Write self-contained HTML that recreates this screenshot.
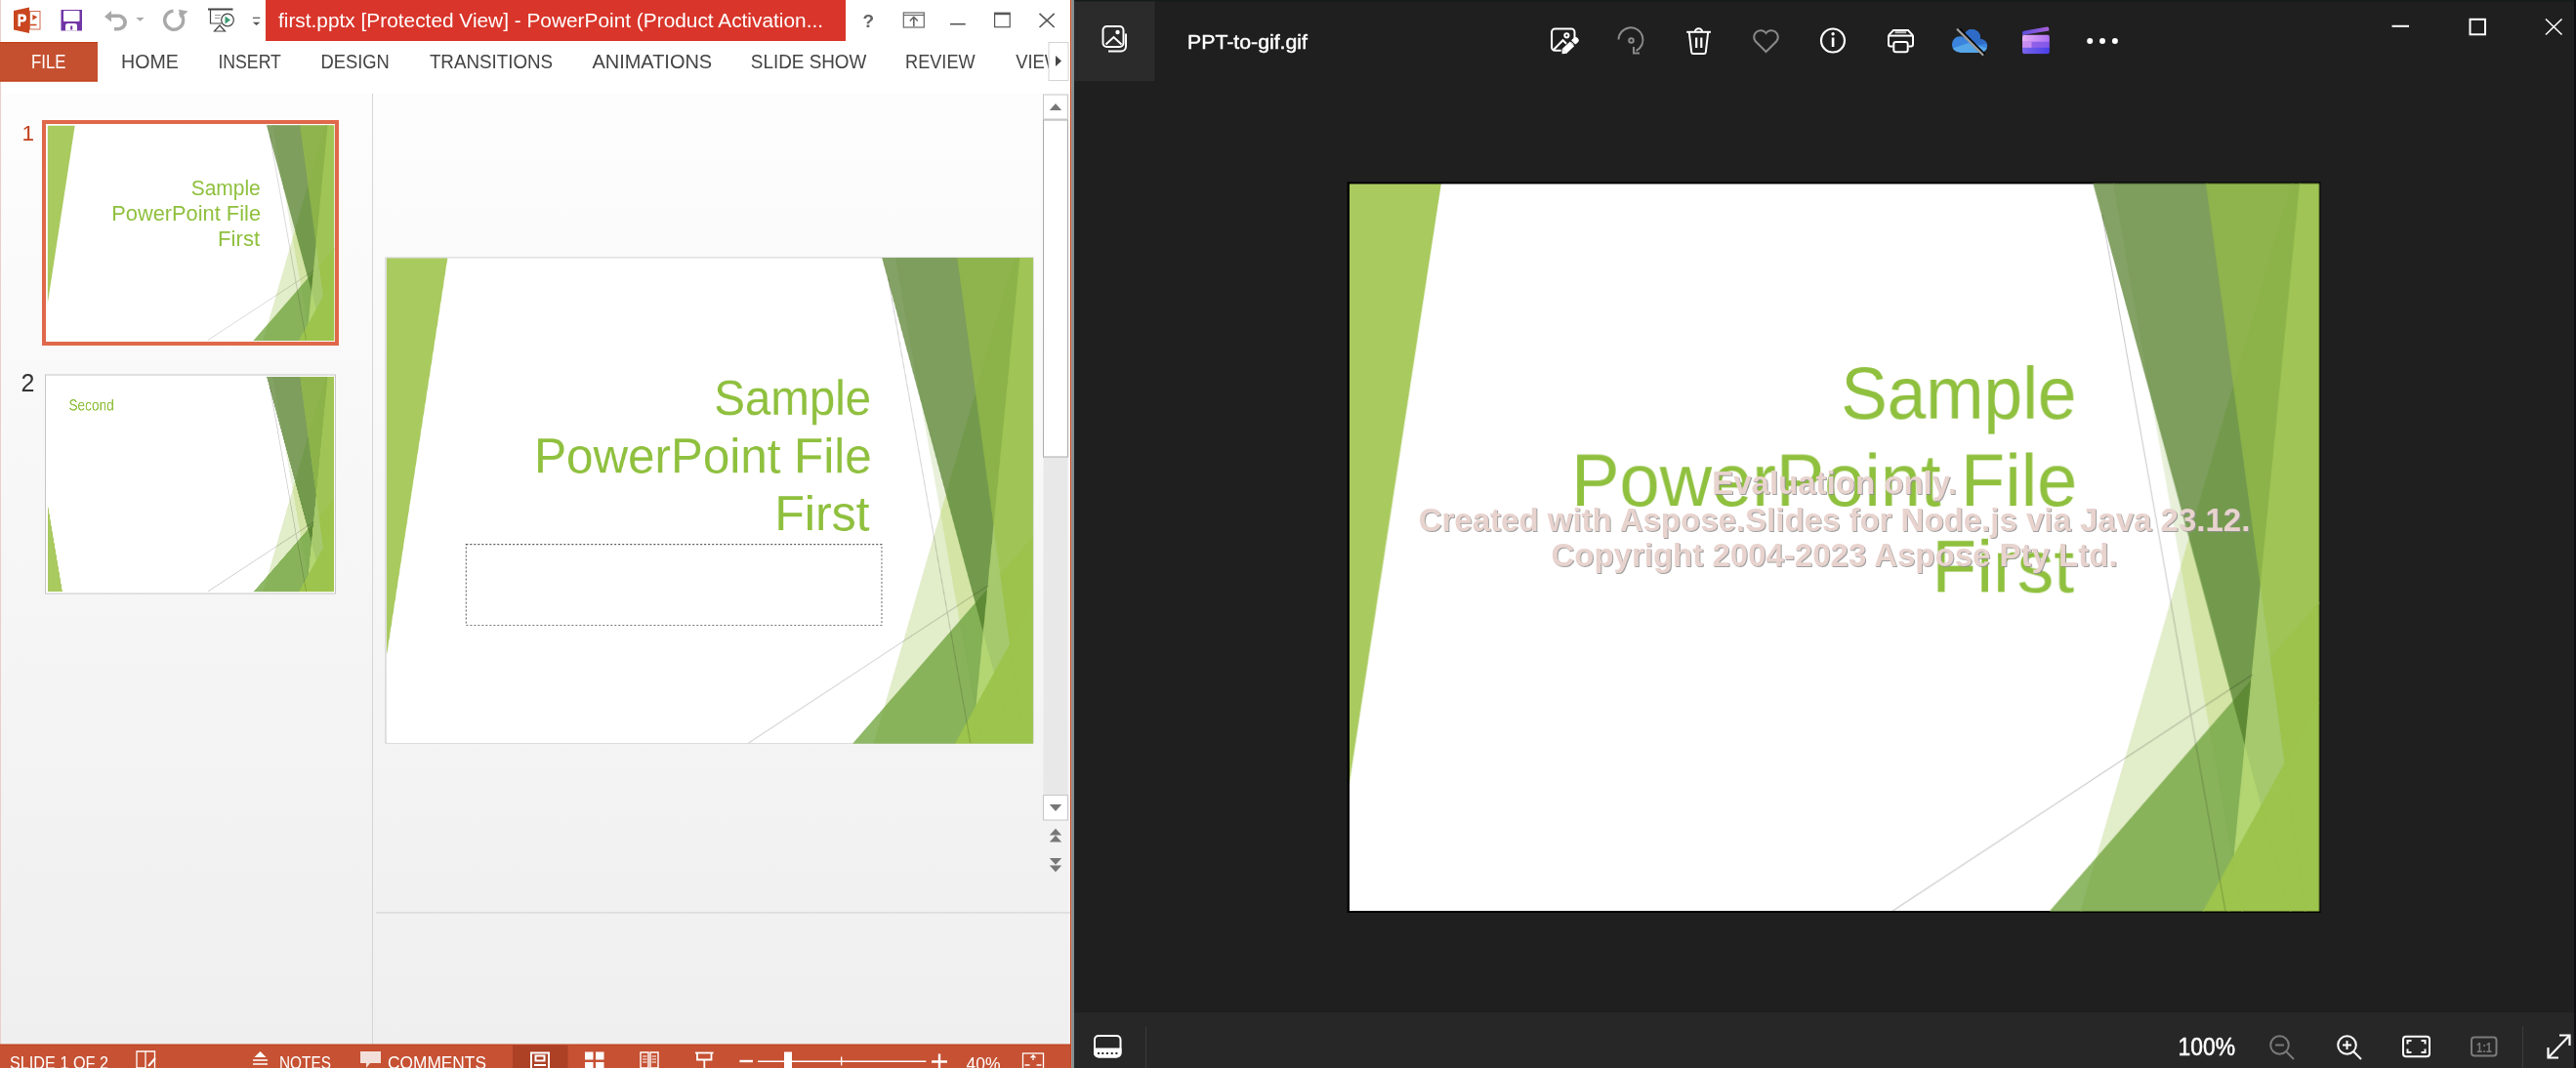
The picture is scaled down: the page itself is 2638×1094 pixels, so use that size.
<!DOCTYPE html><html><head><meta charset="utf-8"><style>html,body{margin:0;padding:0;overflow:hidden;background:#1f1f1f;width:2638px;height:1094px}svg{display:block;will-change:transform}</style></head><body>
<svg width="2638" height="1094" viewBox="0 0 2638 1094" font-family="Liberation Sans, sans-serif">
<defs><g id="facet"><path d="M768.0,0.0 L788.8,0.0 L828.0,221.9Z" fill="#84a265" stroke="#84a265" stroke-width="1.2" vector-effect="non-scaling-stroke"/>
<path d="M858.4,394.3 L828.0,221.9 L866.8,365.5Z" fill="#e8f0da" stroke="#e8f0da" stroke-width="1.2" vector-effect="non-scaling-stroke"/>
<path d="M887.9,561.4 L771.0,695.5 L858.4,394.3Z" fill="#e2edca" stroke="#e2edca" stroke-width="1.2" vector-effect="non-scaling-stroke"/>
<path d="M771.0,695.5 L755.2,750.0 L723.5,750.0Z" fill="#8fb867" stroke="#8fb867" stroke-width="1.2" vector-effect="non-scaling-stroke"/>
<path d="M884.3,0.0 L912.5,207.9 L866.8,365.5 L828.0,221.9 L788.8,0.0Z" fill="#7d9e5c" stroke="#7d9e5c" stroke-width="1.2" vector-effect="non-scaling-stroke"/>
<path d="M866.8,365.5 L912.2,533.6 L887.9,561.4 L858.4,394.3Z" fill="#d3e4a4" stroke="#d3e4a4" stroke-width="1.2" vector-effect="non-scaling-stroke"/>
<path d="M881.4,750.0 L755.2,750.0 L771.0,695.5 L887.9,561.4 L911.6,695.3Z" fill="#89b35b" stroke="#89b35b" stroke-width="1.2" vector-effect="non-scaling-stroke"/>
<path d="M912.2,533.6 L866.8,365.5 L912.5,207.9 L940.4,413.8 L930.8,512.3Z" fill="#739a4c" stroke="#739a4c" stroke-width="1.2" vector-effect="non-scaling-stroke"/>
<path d="M912.5,207.9 L884.3,0.0 L972.8,0.0Z" fill="#8fb44e" stroke="#8fb44e" stroke-width="1.2" vector-effect="non-scaling-stroke"/>
<path d="M911.6,695.3 L887.9,561.4 L912.2,533.6 L924.3,578.5 L913.2,692.3Z" fill="#84b056" stroke="#84b056" stroke-width="1.2" vector-effect="non-scaling-stroke"/>
<path d="M881.4,750.0 L911.6,695.3 L912.4,700.4 L907.6,750.0Z" fill="#9dc44c" stroke="#9dc44c" stroke-width="1.2" vector-effect="non-scaling-stroke"/>
<path d="M912.2,533.6 L930.8,512.3 L924.3,578.5Z" fill="#5e8935" stroke="#5e8935" stroke-width="1.2" vector-effect="non-scaling-stroke"/>
<path d="M912.5,207.9 L972.8,0.0 L980.8,0.0 L940.4,413.8Z" fill="#8cb34a" stroke="#8cb34a" stroke-width="1.2" vector-effect="non-scaling-stroke"/>
<path d="M940.4,413.8 L950.7,489.5 L930.8,512.3Z" fill="#a7ca6e" stroke="#a7ca6e" stroke-width="1.2" vector-effect="non-scaling-stroke"/>
<path d="M913.2,692.3 L924.3,578.5 L941.3,641.3Z" fill="#b3d572" stroke="#b3d572" stroke-width="1.2" vector-effect="non-scaling-stroke"/>
<path d="M911.6,695.3 L913.2,692.3 L912.4,700.4Z" fill="#9dc44c" stroke="#9dc44c" stroke-width="1.2" vector-effect="non-scaling-stroke"/>
<path d="M912.4,700.4 L921.2,750.0 L907.6,750.0Z" fill="#9dc44c" stroke="#9dc44c" stroke-width="1.2" vector-effect="non-scaling-stroke"/>
<path d="M941.3,641.3 L924.3,578.5 L930.8,512.3 L950.7,489.5 L965.4,597.8Z" fill="#a6c96d" stroke="#a6c96d" stroke-width="1.2" vector-effect="non-scaling-stroke"/>
<path d="M940.4,413.8 L980.8,0.0 L1000.0,0.0 L1000.0,432.9 L950.7,489.5Z" fill="#a0c556" stroke="#a0c556" stroke-width="1.2" vector-effect="non-scaling-stroke"/>
<path d="M912.4,700.4 L913.2,692.3 L941.3,641.3 L970.7,750.0 L921.2,750.0Z" fill="#9dc44c" stroke="#9dc44c" stroke-width="1.2" vector-effect="non-scaling-stroke"/>
<path d="M965.4,597.8 L950.7,489.5 L1000.0,432.9 L1000.0,535.0Z" fill="#9dc34c" stroke="#9dc34c" stroke-width="1.2" vector-effect="non-scaling-stroke"/>
<path d="M941.3,641.3 L965.4,597.8 L986.0,750.0 L970.7,750.0Z" fill="#9dc44c" stroke="#9dc44c" stroke-width="1.2" vector-effect="non-scaling-stroke"/>
<path d="M965.4,597.8 L1000.0,535.0 L1000.0,750.0 L986.0,750.0Z" fill="#9dc44c" stroke="#9dc44c" stroke-width="1.2" vector-effect="non-scaling-stroke"/></g>
<linearGradient id="pane" x1="0" y1="0" x2="0" y2="1"><stop offset="0" stop-color="#fdfdfd"/><stop offset="1" stop-color="#efefef"/></linearGradient>
</defs>
<rect x="0" y="0" width="1100" height="1094" fill="#ffffff"/>
<rect x="1" y="95" width="380" height="975" fill="url(#pane)"/>
<rect x="382" y="95" width="714" height="975" fill="url(#pane)"/>
<rect x="0" y="0" width="1" height="1094" fill="#e9cfc9"/>
<rect x="272" y="0" width="594" height="42" fill="#d9352a"/>
<text x="285" y="28" fill="#fff" font-size="20" textLength="558" lengthAdjust="spacingAndGlyphs">first.pptx [Protected View] -  PowerPoint (Product Activation...</text>
<g>
<path d="M14,11 L30,7.5 L30,34 L14,30.5Z" fill="#c9461f"/>
<rect x="30.5" y="11.5" width="10.5" height="18.5" fill="#fff" stroke="#d2694a" stroke-width="1"/>
<path d="M18.5,14.5 h4.5 a4,4 0 0 1 0,8 h-2 v4.5 h-2.5Z M21,17 v3 h1.8 a1.5,1.5 0 0 0 0,-3Z" fill="#fff"/>
<path d="M34,16 l3,1.5 l-3,2Z M31,25.5 h6.5" stroke="#c9461f" stroke-width="1.3" fill="#c9461f"/>
</g>
<path d="M62.5,10 h21.5 v21.5 h-21.5Z" fill="#7136a6"/><rect x="65" y="11" width="16.5" height="11" rx="1" fill="#fff"/><path d="M67,31.5 v-5 a2.5,2.5 0 0 1 2.5,-2.5 h7 a2.5,2.5 0 0 1 2.5,2.5 v5Z" fill="#fff"/><rect x="72.2" y="26.5" width="2" height="4" fill="#7136a6"/>
<path d="M107,17 L114,11 L114,14.5 L121,14.5 A9,8.5 0 0 1 121,31.5 L117,31.5 L117,28 L121,28 A5.2,5 0 0 0 121,18 L114,18 L114,22.5Z" fill="#a9a9a9"/>
<path d="M139.3,18 h8.4 l-4.2,3.7Z" fill="#a9a9a9"/>
<path d="M184,13.2 A9.5,9.5 0 1 1 177.5,11.2" stroke="#a9a9a9" stroke-width="3.4" fill="none"/><path d="M183,9.7 L192.5,11.5 L184.5,18.5Z" fill="#a9a9a9"/>
<g stroke="#444" fill="none" stroke-width="1.2">
<path d="M213,9.5 h25.5" stroke-width="2"/>
<path d="M215.5,10 v14 h12"/>
<path d="M220,15.5 h6 M220,18.5 h5" stroke="#999"/>
<path d="M219.5,32 l5.5,-6 l5.5,6Z"/>
<circle cx="233" cy="20.5" r="6.3"/>
</g><path d="M230.5,16.5 l5.5,4 l-5.5,4Z" fill="#3d9b73"/>
<path d="M258.9,18.3 h7.4" stroke="#555" stroke-width="1.2"/><path d="M258.9,22.7 h7.4 l-3.7,3.4Z" fill="#555"/>
<text x="883.5" y="27.5" fill="#666" font-size="19" font-weight="bold">?</text>
<g stroke="#666" fill="none" stroke-width="1.2"><rect x="925.3" y="13" width="21" height="15"/><path d="M925.3,15.5 h21"/><path d="M935.8,27 v-9 M931.8,21.5 l4,-4 l4,4" stroke-width="1.6"/></g>
<path d="M973,24.7 h15.7" stroke="#555" stroke-width="1.6"/>
<g stroke="#555" fill="none" stroke-width="1.2"><rect x="1018.6" y="13.2" width="15.6" height="14.5"/><path d="M1018.6,14.2 h15.6" stroke-width="2"/></g>
<path d="M1064.5,13.8 L1079.7,28 M1079.7,13.8 L1064.5,28" stroke="#555" stroke-width="1.6"/>
<rect x="0" y="43" width="100" height="40.5" fill="#c5502f"/><rect x="0" y="43" width="100" height="1.2" fill="#c04019"/><rect x="0" y="82.3" width="100" height="1.2" fill="#c04019"/>
<text x="32" y="69.7" fill="#fff" font-size="20.5" textLength="35.5" lengthAdjust="spacingAndGlyphs">FILE</text>
<text x="124.0" y="69.7" fill="#444" font-size="20.5" textLength="58.8" lengthAdjust="spacingAndGlyphs">HOME</text>
<text x="223.39999999999998" y="69.7" fill="#444" font-size="20.5" textLength="64.5" lengthAdjust="spacingAndGlyphs">INSERT</text>
<text x="328.4" y="69.7" fill="#444" font-size="20.5" textLength="70.4" lengthAdjust="spacingAndGlyphs">DESIGN</text>
<text x="439.9" y="69.7" fill="#444" font-size="20.5" textLength="126.2" lengthAdjust="spacingAndGlyphs">TRANSITIONS</text>
<text x="606.4000000000001" y="69.7" fill="#444" font-size="20.5" textLength="122.8" lengthAdjust="spacingAndGlyphs">ANIMATIONS</text>
<text x="768.8000000000001" y="69.7" fill="#444" font-size="20.5" textLength="118.6" lengthAdjust="spacingAndGlyphs">SLIDE SHOW</text>
<text x="927.1" y="69.7" fill="#444" font-size="20.5" textLength="71.5" lengthAdjust="spacingAndGlyphs">REVIEW</text>
<svg x="1040" y="43" width="34" height="40" overflow="hidden"><text x="0.2" y="26.7" fill="#444" font-size="20.5" textLength="47" lengthAdjust="spacingAndGlyphs">VIEW</text></svg>
<rect x="1074" y="43.5" width="20" height="39" fill="#fff" stroke="#d4d4d4" stroke-width="1"/><path d="M1081,57 l6,5.5 l-6,5.5Z" fill="#444"/>
<rect x="381" y="96" width="1" height="974" fill="#d5d5d5"/>
<rect x="385" y="934.3" width="711" height="1.2" fill="#d6d6d6"/>
<text x="22.6" y="143.5" fill="#c43e1c" font-size="22.5">1</text>
<rect x="45" y="125" width="300" height="227" fill="none" stroke="#e0684a" stroke-width="4"/>
<g transform="translate(48.9,128.8) scale(0.292800,0.292800)">
<rect x="0" y="0" width="1000" height="750" fill="#fff"/>
<path d="M0,0 L94.8,0 L0,619.1Z" fill="#a9ca5f"/>
<use href="#facet"/>
<path d="M776.7,32 L903.7,750 M560.6,750 L932,506" stroke="#000" stroke-opacity="0.15" stroke-width="1" vector-effect="non-scaling-stroke" fill="none"/>
<g fill="#8fc03e" font-size="76" transform="translate(-6,0)"><text x="507.2" y="242.3" textLength="243" lengthAdjust="spacingAndGlyphs">Sample</text><text x="229" y="331.8" textLength="522" lengthAdjust="spacingAndGlyphs">PowerPoint File</text><text x="601" y="421.3" textLength="146.8" lengthAdjust="spacingAndGlyphs">First</text></g>

</g>
<text x="21.5" y="401.3" fill="#333" font-size="25">2</text>
<rect x="46.5" y="384" width="297" height="224" fill="#fff" stroke="#c6c6c6" stroke-width="1"/>
<g transform="translate(48.9,386.2) scale(0.292800,0.292800)">
<rect x="0" y="0" width="1000" height="750" fill="#fff"/>
<path d="M0,446.6 L0,750 L51,750Z" fill="#a9ca5f"/>
<use href="#facet"/>
<path d="M776.7,32 L903.7,750 M560.6,750 L932,506" stroke="#000" stroke-opacity="0.15" stroke-width="1" vector-effect="non-scaling-stroke" fill="none"/>
<text x="73.5" y="117" fill="#8fc03e" font-size="55" textLength="158" lengthAdjust="spacingAndGlyphs">Second</text>

</g>
<rect x="395" y="264" width="663" height="497" fill="#fff" stroke="#c6c6c6" stroke-width="1"/>
<g transform="translate(395.5,264.5) scale(0.662000,0.662000)">
<rect x="0" y="0" width="1000" height="750" fill="#fff"/>
<path d="M0,0 L94.8,0 L0,619.1Z" fill="#a9ca5f"/>
<use href="#facet"/>
<path d="M776.7,32 L903.7,750 M560.6,750 L932,506" stroke="#000" stroke-opacity="0.17" stroke-width="1" vector-effect="non-scaling-stroke" fill="none"/>
<g fill="#8fc03e" font-size="76" transform="translate(0,0)"><text x="507.2" y="242.3" textLength="243" lengthAdjust="spacingAndGlyphs">Sample</text><text x="229" y="331.8" textLength="522" lengthAdjust="spacingAndGlyphs">PowerPoint File</text><text x="601" y="421.3" textLength="146.8" lengthAdjust="spacingAndGlyphs">First</text></g>
<rect x="123.5" y="442.8" width="643" height="125" fill="none" stroke="#555" stroke-width="1" stroke-dasharray="2,2" vector-effect="non-scaling-stroke"/>
</g>
<rect x="1068.5" y="97" width="25" height="25" fill="#fff" stroke="#c6c6c6"/><path d="M1074.8,113 L1081,106 L1087.2,113Z" fill="#777"/>
<rect x="1068.5" y="468" width="25" height="346.5" fill="#e8e8e8"/>
<rect x="1068.5" y="123" width="25" height="345" fill="#fff" stroke="#ababab"/>
<rect x="1068.5" y="814.5" width="25" height="25.5" fill="#fff" stroke="#c6c6c6"/><path d="M1074.8,824 L1087.2,824 L1081,831Z" fill="#777"/>
<path d="M1074.8,855.5 L1081,848.7 L1087.2,855.5Z M1074.8,862.5 L1081,855.7 L1087.2,862.5Z" fill="#777"/>
<path d="M1074.8,879 L1087.2,879 L1081,885.8Z M1074.8,886.4 L1087.2,886.4 L1081,893.2Z" fill="#777"/>
<rect x="0" y="1070" width="1096" height="24" fill="#c65133"/><rect x="0" y="1069.5" width="1096" height="1.2" fill="#c04520"/>
<rect x="525" y="1070.5" width="56.5" height="24" fill="#ad4126"/>
<text x="10" y="1094.5" fill="#fff" font-size="18" textLength="101" lengthAdjust="spacingAndGlyphs">SLIDE 1 OF 2</text>
<g stroke="#fff" fill="none" stroke-width="1.3"><path d="M140,1077 h9 v17 h-9Z M149,1077 h9.5 v17"/><path d="M152,1092 l7,-8" stroke-width="2"/></g>
<path d="M260.5,1083 l6,-6 l6,6Z" fill="#fff"/><path d="M259,1086 h15 M259,1090 h15" stroke="#fff" stroke-width="1.4"/>
<text x="286" y="1094.5" fill="#fff" font-size="18" textLength="53" lengthAdjust="spacingAndGlyphs">NOTES</text>
<path d="M369,1077 h21 v12 h-11 l-4,5 v-5 h-6Z" fill="#f3dfd9"/>
<text x="397" y="1094.5" fill="#fff" font-size="18" textLength="101" lengthAdjust="spacingAndGlyphs">COMMENTS</text>
<g fill="none" stroke="#fff" stroke-width="2"><path d="M544,1094 v-15.5 h18 v15.5"/><rect x="548.5" y="1081.5" width="9" height="5"/><path d="M547,1091 h12"/></g>
<g fill="#fff"><rect x="599" y="1077.5" width="8.5" height="8"/><rect x="610" y="1077.5" width="8.5" height="8"/><rect x="599" y="1088" width="8.5" height="8"/><rect x="610" y="1088" width="8.5" height="8"/></g>
<g fill="none" stroke="#fff" stroke-width="1.4"><path d="M656,1078 h8 v16 h-8Z M666,1078 h8 v16 h-8Z"/><path d="M658,1082 h4.5 M658,1085 h4.5 M658,1088 h4.5 M667.5,1082 h4.5 M667.5,1085 h4.5 M667.5,1088 h4.5" stroke-width="1"/></g>
<g fill="none" stroke="#fff" stroke-width="1.8"><path d="M712,1078.5 h18.6"/><path d="M714,1079 v6.5 h14.5 v-6.5"/><path d="M721.3,1086 v8"/></g>
<path d="M757.4,1087 h13.6" stroke="#fff" stroke-width="2.4"/>
<path d="M776,1087.2 h172.4" stroke="#fff" stroke-width="1.4"/>
<rect x="803" y="1077.5" width="8" height="18" fill="#fff"/>
<path d="M861.7,1082.6 v9" stroke="#fff" stroke-width="1.3"/>
<path d="M954,1087.5 h16 M962,1079.5 v15" stroke="#fff" stroke-width="2.4"/>
<text x="989.5" y="1096" fill="#fff" font-size="18.5" textLength="35" lengthAdjust="spacingAndGlyphs">40%</text>
<g fill="none" stroke="#fff" stroke-width="1.3"><rect x="1047.5" y="1079" width="21" height="17"/><path d="M1058,1081 v5 M1055.5,1083.5 l2.5,-2.5 l2.5,2.5 M1049.5,1091 h5 M1061.5,1091 h5"/></g>
<rect x="1096" y="0" width="1.2" height="1094" fill="#c9441c"/><rect x="1097.2" y="0" width="2.8" height="1094" fill="#858c8c"/>
<rect x="1100" y="0" width="1538" height="1094" fill="#1f1f1f"/>
<rect x="1100" y="0" width="1538" height="1.3" fill="#161c1d"/>
<rect x="1100" y="1.5" width="82.4" height="81.5" fill="#2b2b2b"/>
<g fill="none" stroke="#fff" stroke-width="2"><rect x="1129.5" y="27" width="21" height="21" rx="4"/><path d="M1132.5,45.5 l8,-7.5 l8,7.5"/><path d="M1135,52.5 h13 a5,5 0 0 0 5,-5 v-13"/></g><circle cx="1144.5" cy="33" r="2.2" fill="#fff"/>
<text x="1216" y="49.5" fill="#fff" stroke="#fff" stroke-width="0.45" font-size="20.5" textLength="123" lengthAdjust="spacingAndGlyphs">PPT-to-gif.gif</text>
<g fill="none" stroke="#fff" stroke-width="2"><path d="M1598.7,51.8 h-6.3 a3.3,3.3 0 0 1 -3.3,-3.3 v-15.8 a3.3,3.3 0 0 1 3.3,-3.3 h16.8 a3.3,3.3 0 0 1 3.3,3.3 v6.2"/><path d="M1591.2,50.8 l9.3,-9.6 l3.6,3.6"/><circle cx="1604.4" cy="36.3" r="2.1"/></g><path d="M1602,52.3 L1610,44.9" stroke="#fff" stroke-width="6.4"/><path d="M1599.6,55.2 L1599.6,49.9 L1604.6,54.7Z" fill="#fff"/><path d="M1612.2,42.6 L1613.6,41.3" stroke="#fff" stroke-width="6.2" stroke-linecap="round"/><path d="M1608.3,41.4 L1613.5,46.6" stroke="#1f1f1f" stroke-width="1.2"/>
<g fill="none" stroke="#8a8a8a" stroke-width="2"><path d="M1657.5,40.5 a12.5,12.5 0 1 1 18,11.5"/><circle cx="1670.5" cy="41.5" r="2.3"/><path d="M1673,48 l0,6.5 l6,0"/></g>
<g fill="none" stroke="#fff" stroke-width="2"><path d="M1727.2,32.8 h24.8"/><path d="M1735.9,32.4 a3.6,3.1 0 0 1 7.2,0"/><path d="M1729.8,33 l2.4,20.3 a2,2 0 0 0 2,1.7 h10.6 a2,2 0 0 0 2,-1.7 l2.4,-20.3"/><path d="M1737.2,38.5 v10.5 M1742.3,38.5 v10.5" stroke-width="2.2"/></g>
<path d="M1808.5,53 l-11,-11 a6,6 0 0 1 11,-8 a6,6 0 0 1 11,8Z" fill="none" stroke="#8a8a8a" stroke-width="2"/>
<circle cx="1877" cy="41.5" r="12" fill="none" stroke="#fff" stroke-width="2.2"/><rect x="1875.8" y="38.5" width="2.6" height="9.5" fill="#fff"/><circle cx="1877.1" cy="34.8" r="1.7" fill="#fff"/>
<g fill="none" stroke="#fff" stroke-width="2"><path d="M1938.5,47.5 h-2.5 a2,2 0 0 1 -2,-2 v-8.5 a2,2 0 0 1 0.6,-1.4 l4.4,-4.6 h15 l4.4,4.6 a2,2 0 0 1 0.6,1.4 v8.5 a2,2 0 0 1 -2,2 h-2.5"/><path d="M1934.5,36.6 h23.5"/><rect x="1939.3" y="43" width="14.4" height="10.2" rx="2.2" fill="#1f1f1f"/></g><rect x="1940.6" y="32.2" width="11.6" height="2" fill="#bdbdbd"/>
<defs><clipPath id="cl"><circle cx="2007" cy="45.4" r="8.1"/><circle cx="2019.5" cy="38.6" r="8.6"/><circle cx="2028.6" cy="46.9" r="6.6"/><rect x="2007" y="44" width="22" height="9.9"/></clipPath></defs><g clip-path="url(#cl)"><rect x="1995" y="28" width="45" height="30" fill="#3a84dd"/><path d="M2008,28 L2040,28 L2040,43 L2027,46 L2004,36Z" fill="#2d6bc7"/><path d="M1995,51 L2016,44 L2040,50.5 L2040,58 L1995,58Z" fill="#55a6e8"/></g><path d="M2006.2,30 L2032,56.3" stroke="#000" stroke-width="3.6"/><path d="M2004.7,30.2 L2030.5,56" stroke="#a0a0a0" stroke-width="2.3" stroke-linecap="round"/>
<defs><linearGradient id="cf" x1="0" x2="1"><stop offset="0" stop-color="#5b4fe0"/><stop offset="1" stop-color="#a95fd8"/></linearGradient><linearGradient id="cb1" x1="0" x2="1"><stop offset="0" stop-color="#e6aef7"/><stop offset="1" stop-color="#ad6ff2"/></linearGradient><linearGradient id="cb2" x1="0" x2="1"><stop offset="0" stop-color="#9a67ea"/><stop offset="1" stop-color="#8257e8"/></linearGradient><linearGradient id="cb3" x1="0" x2="1"><stop offset="0" stop-color="#7a66ea"/><stop offset="1" stop-color="#4a3ee8"/></linearGradient><clipPath id="cbc"><rect x="2071" y="35.5" width="27.8" height="19.8" rx="2.2"/></clipPath></defs><path d="M2072.5,31.8 L2096,27.6 a2,2 0 0 1 2.3,2 v1.8 L2071,36 v-2.2 a2,2 0 0 1 1.5,-2Z" fill="url(#cf)"/><g clip-path="url(#cbc)"><rect x="2071" y="35.5" width="28" height="7.7" fill="url(#cb1)"/><rect x="2071" y="42.7" width="28" height="6.6" fill="url(#cb2)"/><rect x="2071" y="42.7" width="9.5" height="6.6" fill="#c98cef"/><rect x="2071" y="48.8" width="28" height="6.6" fill="url(#cb3)"/></g>
<g fill="#fff"><circle cx="2140.2" cy="42" r="3"/><circle cx="2153" cy="42" r="3"/><circle cx="2165.9" cy="42" r="3"/></g>
<path d="M2449.5,26.8 h17.5" stroke="#fff" stroke-width="2"/>
<rect x="2529.5" y="19.8" width="15.5" height="15.5" fill="none" stroke="#fff" stroke-width="2"/>
<path d="M2607,19.5 L2623.5,35.5 M2623.5,19.5 L2607,35.5" stroke="#fff" stroke-width="1.6"/>
<rect x="1379.7" y="186.4" width="996.8" height="748.6" fill="#000"/>
<g transform="translate(1381.7,188.4) scale(0.992800,0.992800)">
<rect x="0" y="0" width="1000" height="750" fill="#fff"/>
<path d="M0,0 L94.8,0 L0,619.1Z" fill="#a9ca5f"/>
<use href="#facet"/>
<path d="M776.7,32 L903.7,750 M560.6,750 L932,506" stroke="#000" stroke-opacity="0.22" stroke-width="1" vector-effect="non-scaling-stroke" fill="none"/>
<g fill="#8fc03e" font-size="76" transform="translate(0,0)"><text x="507.2" y="242.3" textLength="243" lengthAdjust="spacingAndGlyphs">Sample</text><text x="229" y="331.8" textLength="522" lengthAdjust="spacingAndGlyphs">PowerPoint File</text><text x="601" y="421.3" textLength="146.8" lengthAdjust="spacingAndGlyphs">First</text></g>

</g>
<text x="1879.5" y="507.4" text-anchor="middle" font-size="33" font-weight="bold" fill="#8f8f8f" fill-opacity="0.85">Evaluation only.</text>
<text x="1878.5" y="506.4" text-anchor="middle" font-size="33" font-weight="bold" fill="#e8d3ce">Evaluation only.</text>
<text x="1879.5" y="545.1" text-anchor="middle" font-size="33" font-weight="bold" fill="#8f8f8f" fill-opacity="0.85">Created with Aspose.Slides for Node.js via Java 23.12.</text>
<text x="1878.5" y="544.1" text-anchor="middle" font-size="33" font-weight="bold" fill="#e8d3ce">Created with Aspose.Slides for Node.js via Java 23.12.</text>
<text x="1879.5" y="581.4" text-anchor="middle" font-size="33" font-weight="bold" fill="#8f8f8f" fill-opacity="0.85">Copyright 2004-2023 Aspose Pty Ltd.</text>
<text x="1878.5" y="580.4" text-anchor="middle" font-size="33" font-weight="bold" fill="#e8d3ce">Copyright 2004-2023 Aspose Pty Ltd.</text>
<rect x="1100" y="1036.8" width="1538" height="57.2" fill="#272727"/>
<g fill="none" stroke="#fff" stroke-width="2"><rect x="1121" y="1061" width="26.5" height="21.5" rx="4"/></g><path d="M1120,1073.5 h28.5 v5 a5,5 0 0 1 -5,5 h-18.5 a5,5 0 0 1 -5,-5Z" fill="#fff"/><g fill="#272727"><rect x="1124" y="1078" width="2" height="2"/><rect x="1128.3" y="1078" width="2" height="2"/><rect x="1132.9" y="1078" width="2" height="2"/><rect x="1137.7" y="1078" width="2" height="2"/><rect x="1142.4" y="1078" width="2" height="2"/></g>
<rect x="1173" y="1052" width="1" height="42" fill="#3c3c3c"/>
<text x="2230.5" y="1080.6" fill="#fff" stroke="#fff" stroke-width="0.5" font-size="25.5" textLength="58.5" lengthAdjust="spacingAndGlyphs">100%</text>
<g fill="none" stroke="#7a7a7a" stroke-width="2"><circle cx="2334.5" cy="1070.5" r="9.3"/><path d="M2341,1077 l8,8"/><path d="M2330,1070.5 h9"/></g>
<g fill="none" stroke="#fff" stroke-width="2"><circle cx="2403.5" cy="1070.5" r="9.3"/><path d="M2410,1077 l8,8"/><path d="M2399,1070.5 h9 M2403.5,1066 v9"/></g>
<g fill="none" stroke="#fff" stroke-width="2"><rect x="2461" y="1061.8" width="27" height="20.5" rx="3"/><path d="M2465.5,1069.5 v-3.5 h4 M2479.5,1066 h4 v3.5 M2483.5,1074.5 v3.5 h-4 M2469.5,1078 h-4 v-3.5"/></g>
<rect x="2531" y="1062.5" width="25.5" height="19" rx="3" fill="none" stroke="#7a7a7a" stroke-width="2"/><text x="2536" y="1077.5" fill="#7a7a7a" font-size="14" font-weight="bold" textLength="16" lengthAdjust="spacingAndGlyphs">1:1</text>
<rect x="2583" y="1051.5" width="1" height="42.5" fill="#3c3c3c"/>
<g fill="none" stroke="#fff" stroke-width="2.2"><path d="M2610,1083 L2631,1061"/><path d="M2621,1060.5 h10.5 v10.5"/><path d="M2609.5,1073 v10.5 h10.5"/></g>
<rect x="2636" y="0" width="2" height="1094" fill="#0d0d12"/>
</svg></body></html>
